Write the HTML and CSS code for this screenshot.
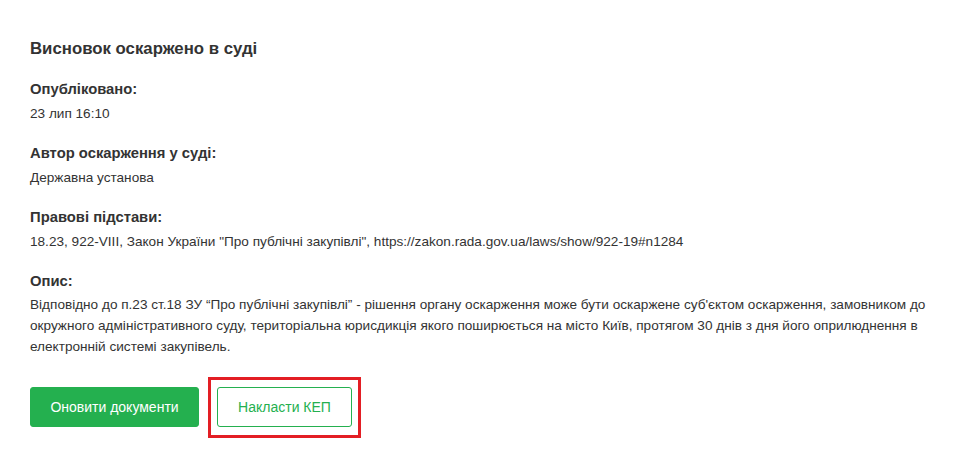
FILE: index.html
```html
<!DOCTYPE html>
<html lang="uk">
<head>
<meta charset="utf-8">
<link rel="stylesheet" href="styles.css">
</head>
<body>
<div class="page">
  <h2 class="title">Висновок оскаржено в суді</h2>
  <div class="field">
    <div class="label">Опубліковано:</div>
    <div class="value">23 лип 16:10</div>
  </div>
  <div class="field">
    <div class="label">Автор оскарження у суді:</div>
    <div class="value">Державна установа</div>
  </div>
  <div class="field">
    <div class="label">Правові підстави:</div>
    <div class="value">18.23, 922-VIII, Закон України "Про публічні закупівлі", https://zakon.rada.gov.ua/laws/show/922-19#n1284</div>
  </div>
  <div class="field">
    <div class="label">Опис:</div>
    <div class="value desc">Відповідно до п.23 ст.18 ЗУ “Про публічні закупівлі” - рішення органу оскарження може бути оскаржене суб'єктом оскарження, замовником до окружного адміністративного суду, територіальна юрисдикція якого поширюється на місто Київ, протягом 30 днів з дня його оприлюднення в електронній системі закупівель.</div>
  </div>
  <div class="actions">
    <button class="btn btn-primary">Оновити документи</button>
    <button class="btn btn-outline highlighted">Накласти КЕП</button>
  </div>
</div>
</body>
</html>
```

FILE: styles.css
```css
* { box-sizing: border-box; }
html, body {
  margin: 0;
  padding: 0;
  background: #ffffff;
}
body {
  font-family: "Liberation Sans", Arial, sans-serif;
  color: #333333;
}
.page {
  padding: 38px 30px 40px 30px;
  width: 965px;
}
.title {
  margin: 0 0 19px 0;
  font-size: 16.8px;
  line-height: 22px;
  font-weight: bold;
  color: #333333;
}
.field {
  margin-bottom: 19px;
}
.label {
  font-size: 14.8px;
  font-weight: bold;
  line-height: 20px;
}
.value {
  margin-top: 5px;
  font-size: 13.6px;
  line-height: 20px;
}
.desc {
  margin-top: 3px;
  line-height: 21px;
  max-width: 910px;
}
.actions {
  display: flex;
  gap: 18px;
  margin-top: 30px;
}
.btn {
  height: 40px;
  font-family: "Liberation Sans", Arial, sans-serif;
  font-size: 14px;
  border-radius: 3px;
  cursor: pointer;
}
.btn-primary {
  width: 169px;
  background: #24b04f;
  border: 1px solid #24b04f;
  color: #ffffff;
}
.btn-outline {
  width: 135px;
  background: #ffffff;
  border: 1px solid #24b04f;
  color: #24b04f;
}
.highlighted {
  position: relative;
}
.highlighted::after {
  content: "";
  position: absolute;
  top: -11px;
  bottom: -12px;
  left: -10px;
  right: -10px;
  border: 3px solid #e31e24;
  pointer-events: none;
}
```
